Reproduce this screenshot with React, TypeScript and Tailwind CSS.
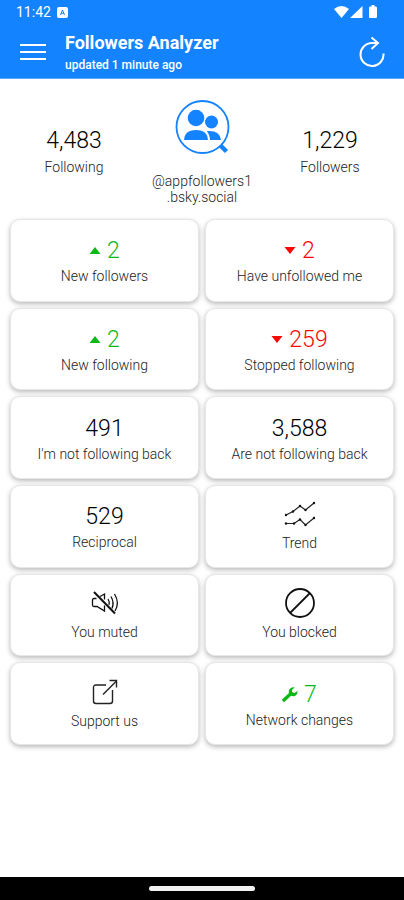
import React from 'react'

const TriangleUp = () => (
  <svg width="12" height="8" viewBox="0 0 12 8" fill="currentColor" aria-hidden="true">
    <path d="M6 0 L11.500 7 H0.500 Z" />
  </svg>
)

const TriangleDown = () => (
  <svg width="12" height="8" viewBox="0 0 12 8" fill="currentColor" aria-hidden="true">
    <path d="M0.500 0 H11.500 L6 7 Z" />
  </svg>
)

const Wrench = () => (
  <svg width="16" height="16" viewBox="0 0 16 16" aria-hidden="true">
    <path d="M2 13 L9 6.500" stroke="currentColor" strokeWidth="3.4" strokeLinecap="round" />
    <path d="M12.6 0.600 A4.4 4.4 0 1 0 15.5 4.1 L12.4 6.1 L10 5.1 L10.1 2.7 Z" fill="currentColor" />
  </svg>
)

const TrendIcon = () => (
  <svg width="32" height="26" viewBox="0 0 32 26" fill="none" stroke="#222" strokeWidth="1.2" aria-hidden="true">
    <path d="M2 14 L9 10.500 L16 5 L21.500 9 L30 2" />
    <path d="M2 22.500 H10 L16 18.500 L21.500 24 L30 17" />
    <g fill="#111" stroke="none">
      <circle cx="2" cy="14" r="1.200" />
      <circle cx="9" cy="10.500" r="1.200" />
      <circle cx="16" cy="5" r="1.200" />
      <circle cx="21.500" cy="9" r="1.200" />
      <circle cx="30" cy="2" r="1.200" />
      <circle cx="2" cy="22.500" r="1.200" />
      <circle cx="10" cy="22.500" r="1.200" />
      <circle cx="16" cy="18.500" r="1.200" />
      <circle cx="21.500" cy="24" r="1.200" />
      <circle cx="30" cy="17" r="1.200" />
    </g>
  </svg>
)

const MutedIcon = () => (
  <svg width="28" height="24" viewBox="0 0 28 24" fill="none" stroke="#111" strokeWidth="1.300" aria-hidden="true">
    <path d="M5.500 7.500 H3 Q1.500 7.500 1.500 9 V14 Q1.500 15.500 3 15.500 H6 L13.500 20 V14.500" />
    <path d="M9 5.500 L13.500 3 V8.500" />
    <path d="M17 8 Q19 11 18 14" />
    <path d="M20 5.500 Q23.500 11.500 21 17.500" />
    <path d="M23.500 3 Q29 11.500 24 20" />
    <path d="M3 1 L24 22.500" strokeWidth="2" />
  </svg>
)

const BlockedIcon = () => (
  <svg width="32" height="32" viewBox="0 0 32 32" fill="none" stroke="#111" strokeWidth="1.800" aria-hidden="true">
    <circle cx="16" cy="16" r="14" />
    <path d="M6 26 L26 6" />
  </svg>
)

const ShareIcon = () => (
  <svg width="26" height="26" viewBox="0 0 26 26" fill="none" stroke="#222" strokeWidth="1.400" aria-hidden="true">
    <path d="M14 6 H4 Q1.500 6 1.500 8.500 V22 Q1.500 24.500 4 24.500 H18 Q20.500 24.500 20.500 22 V11" />
    <path d="M11 15.500 L24 2.500" />
    <path d="M17.500 1.500 H24.500 V8.500" />
  </svg>
)

const Logo = () => (
  <svg width="56" height="56" viewBox="0 0 56 56" fill="#1483ff" aria-hidden="true">
    <circle cx="28.500" cy="28" r="26" fill="#fff" stroke="#1483ff" strokeWidth="1.800" />
    <circle cx="37.500" cy="23" r="6.500" />
    <path d="M33 32 Q46 31 47 41 H35 Z" />
    <circle cx="22" cy="19" r="9.500" fill="#fff" />
    <circle cx="22" cy="19" r="8.300" />
    <path d="M9 42 Q9 30 22 30 Q35 30 35 42 Z" stroke="#fff" strokeWidth="2" />
    <path d="M46.500 46.500 L52.500 52.500" stroke="#1483ff" strokeWidth="4.500" />
  </svg>
)

const cards = [
  { label: 'New followers', value: '2', icon: <TriangleUp />, color: 'text-[#0cb816]' },
  { label: 'Have unfollowed me', value: '2', icon: <TriangleDown />, color: 'text-[#fb0505]' },
  { label: 'New following', value: '2', icon: <TriangleUp />, color: 'text-[#0cb816]' },
  { label: 'Stopped following', value: '259', icon: <TriangleDown />, color: 'text-[#fb0505]' },
  { label: "I'm not following back", value: '491', color: 'text-black' },
  { label: 'Are not following back', value: '3,588', color: 'text-black' },
  { label: 'Reciprocal', value: '529', color: 'text-black' },
  { label: 'Trend', icon: <TrendIcon /> },
  { label: 'You muted', icon: <MutedIcon /> },
  { label: 'You blocked', icon: <BlockedIcon /> },
  { label: 'Support us', icon: <ShareIcon /> },
  { label: 'Network changes', value: '7', icon: <Wrench />, color: 'text-[#0cb816]' },
]

function StatusBar() {
  return (
    <div className="flex h-6 items-center justify-between pl-4 pr-[26px]">
      <div className="flex items-center gap-[6px] text-sm">
        <span>11:42</span>
        <svg width="11" height="11" viewBox="0 0 11 11" aria-hidden="true">
          <rect width="11" height="11" rx="2" fill="#fff" />
          <path d="M3.500 8 L5.500 3 L7.500 8 M4.200 6.300 H6.800" stroke="#1483ff" fill="none" />
        </svg>
      </div>
      <svg width="44" height="14" viewBox="0 0 44 14" fill="#fff" aria-hidden="true">
        <path d="M0 4 Q7.500 -2 15 4 L7.500 13 Z" />
        <path d="M16 13 L28.500 1 V13 Z" />
        <path d="M37.500 0 H40.500 V1.500 H42 Q43 1.500 43 3 V12 Q43 13 42 13 H36 Q35 13 35 12 V3 Q35 1.500 36 1.500 H37.500 Z" />
      </svg>
    </div>
  )
}

function Header() {
  return (
    <header className="border-b border-[#5aa7fb] bg-[#1483ff] text-white">
      <StatusBar />
      <div className="flex h-[54px] items-center pt-1 pl-5 pr-[19px]">
        <button type="button" aria-label="Menu" className="pb-[2px]">
          <svg width="26" height="18" viewBox="0 0 26 18" fill="none" stroke="#fff" strokeWidth="2" aria-hidden="true">
            <path d="M0 2 H26 M0 9 H26 M0 16 H26" />
          </svg>
        </button>
        <div className="ml-[19px] flex-1">
          <h1 className="text-[18px] leading-6 font-bold">Followers Analyzer</h1>
          <p className="text-[12px] leading-5 font-medium">updated 1 minute ago</p>
        </div>
        <button type="button" aria-label="Refresh" className="pb-[2px]">
          <svg width="26" height="30" viewBox="0 0 26 30" fill="none" stroke="#fff" strokeWidth="2" aria-hidden="true">
            <path d="M24.500 16.500 A11.500 11.500 0 1 1 13 6 H18" />
            <path d="M12.500 0.500 L19 6 L12.500 12" />
          </svg>
        </button>
      </div>
    </header>
  )
}

function Total({ value, label }: { value: string; label: string }) {
  return (
    <div className="flex flex-col items-center pt-7">
      <span className="text-[23px] leading-7 font-light">{value}</span>
      <span className="text-sm leading-6 font-light text-[#222]">{label}</span>
    </div>
  )
}

export default function App() {
  return (
    <div className="flex min-h-screen flex-col bg-white font-[Roboto,sans-serif] text-black">
      <Header />
      <main className="px-[10px]">
        <section className="grid h-[140px] grid-cols-3 pt-[20px]">
          <Total value="4,483" label="Following" />
          <div className="flex flex-col items-center text-center">
            <Logo />
            <p className="mt-[18px] text-sm leading-4 font-light text-[#222]">
              @appfollowers1
              <br />
              .bsky.social
            </p>
          </div>
          <Total value="1,229" label="Followers" />
        </section>
        <section className="grid h-[526px] auto-rows-fr grid-cols-2 gap-[6px]">
          {cards.map((item, index) => (
            <button
              key={index}
              type="button"
              className="flex flex-col items-center justify-center rounded-[10px] border border-[#e6e6e6] bg-white pt-[6px] shadow-[0_2px_5px_rgba(0,0,0,0.28)]"
            >
              {item.value ? (
                <span className={`flex h-[26px] items-center gap-[6px] text-[23px] leading-[26px] font-light ${item.color}`}>
                  {item.icon}
                  {item.value}
                </span>
              ) : (
                <span className="flex h-7 items-center pb-[6px]">{item.icon}</span>
              )}
              <span className="text-sm leading-6 font-light text-[#222]">{item.label}</span>
            </button>
          ))}
        </section>
      </main>
      <footer className="mt-auto flex h-[23px] items-center justify-center bg-black">
        <div className="h-[5px] w-[106px] rounded-full bg-[#f2f2f2]" />
      </footer>
    </div>
  )
}
